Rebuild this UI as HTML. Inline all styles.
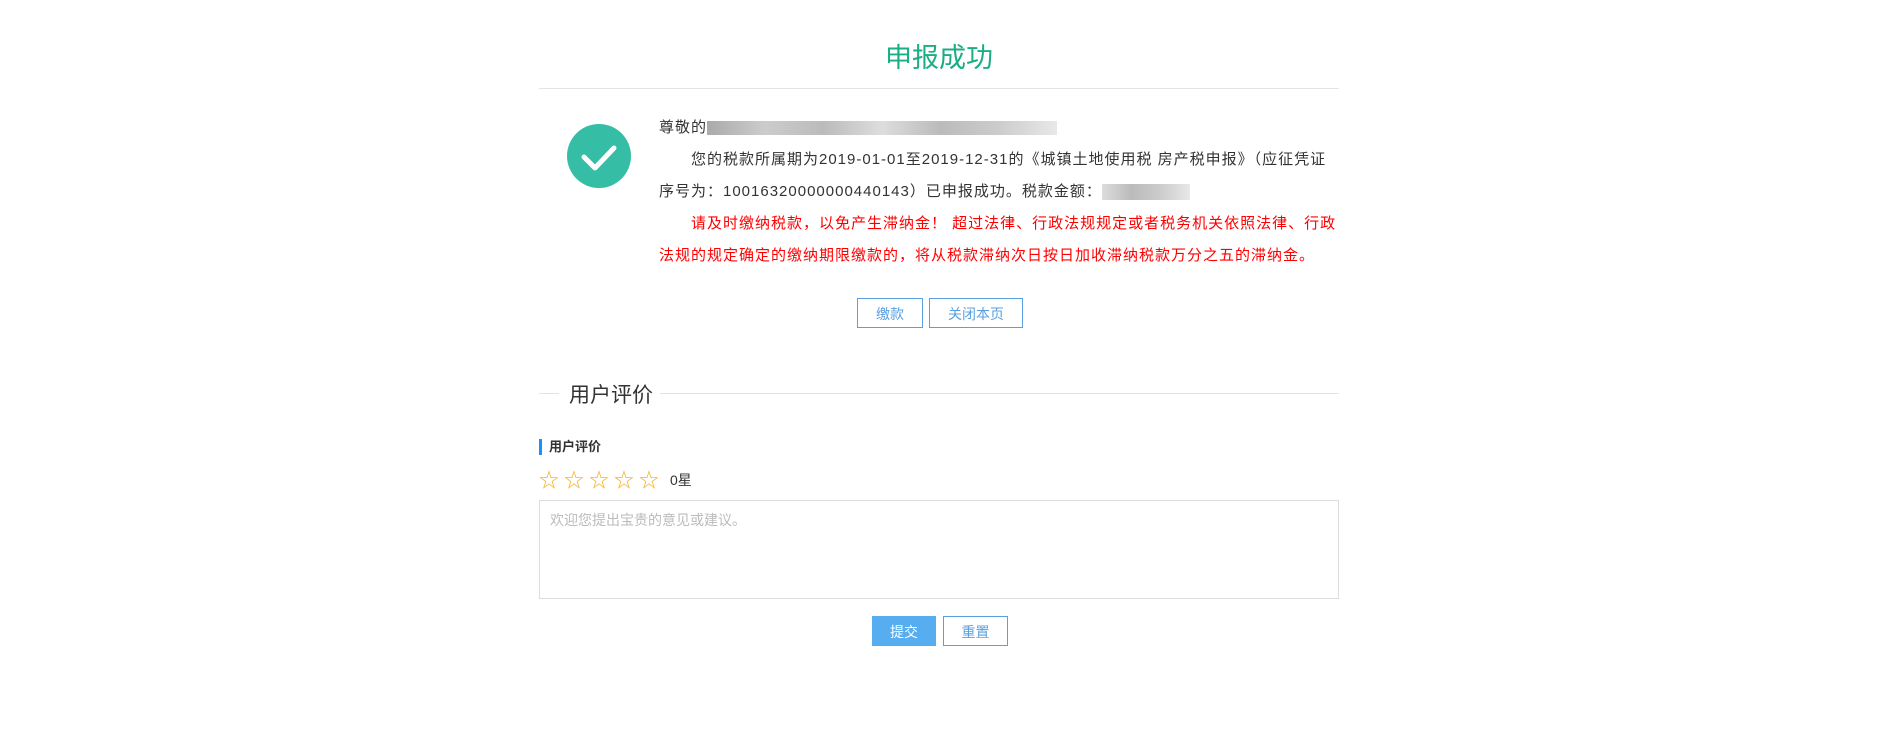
<!DOCTYPE html>
<html><head><meta charset="utf-8"><style>
body{margin:0;background:#fff;font-family:"Liberation Sans","Noto Sans CJK SC",sans-serif;color:#333;}
.wrap{position:absolute;left:539px;width:800px;top:0;}
.title{position:absolute;top:36px;width:800px;text-align:center;color:#1aae84;font-size:27px;}
.hr{position:absolute;top:88px;left:0;width:800px;height:1px;background:#e3e3e3;}
.circle{position:absolute;left:28px;top:124px;width:64px;height:64px;border-radius:50%;background:#35bea5;}
.txt{position:absolute;left:120px;top:112px;width:700px;font-size:15px;line-height:32px;white-space:nowrap;letter-spacing:1px;}
.red{color:#f00;}
.btn{position:absolute;height:30px;border:1px solid #5aa0e0;color:#5aa0e0;font-size:14px;line-height:30px;text-align:center;box-sizing:border-box;background:#fff;}
.sec{position:absolute;top:393px;height:1px;background:#e3e3e3;}
.sect{position:absolute;top:379px;left:30px;font-size:21px;color:#333;}
.lbl{position:absolute;top:439px;left:0;border-left:3px solid #1890ff;padding-left:7px;font-size:13px;font-weight:bold;line-height:16px;}
.stars{position:absolute;top:464px;left:0;font-size:20px;color:#f5b025;letter-spacing:5px;}
.ta{position:absolute;top:500px;left:0;width:800px;height:99px;border:1px solid #ddd;box-sizing:border-box;padding:9px 10px;color:#bbb;font-size:14px;}
</style></head><body>
<div class="wrap">
<div class="title">申报成功</div>
<div class="hr"></div>
<div class="circle"><svg width="64" height="64" viewBox="0 0 64 64"><path d="M17 33 L28 44 L47 24" stroke="#fff" stroke-width="5" fill="none" stroke-linecap="round" stroke-linejoin="round"/></svg></div>
<div class="txt">
<div>尊敬的<span style="display:inline-block;width:350px;height:14px;background:linear-gradient(90deg,#aaa,#ccc,#bbb,#ddd,#bbb,#ccc,#e8e8e8);vertical-align:middle"></span></div>
<div style="padding-left:32px">您的税款所属期为2019-01-01至2019-12-31的《城镇土地使用税 房产税申报》（应征凭证</div>
<div>序号为：10016320000000440143）已申报成功。税款金额：<span style="display:inline-block;width:88px;height:16px;background:linear-gradient(90deg,#ddd,#bbb,#ccc,#e8e8e8);vertical-align:middle"></span></div>
<div class="red" style="padding-left:32px">请及时缴纳税款，以免产生滞纳金！ 超过法律、行政法规规定或者税务机关依照法律、行政</div>
<div class="red">法规的规定确定的缴纳期限缴款的，将从税款滞纳次日按日加收滞纳税款万分之五的滞纳金。</div>
</div>
<div class="btn" style="left:318px;top:298px;width:66px;">缴款</div>
<div class="btn" style="left:390px;top:298px;width:94px;">关闭本页</div>
<div class="sec" style="left:0;width:20px"></div>
<div class="sect">用户评价</div>
<div class="sec" style="left:121px;width:679px"></div>
<div class="lbl">用户评价</div>
<div class="stars">☆☆☆☆☆<span style="color:#333;font-size:14px;letter-spacing:0;vertical-align:2px;margin-left:6px">0星</span></div>
<div class="ta">欢迎您提出宝贵的意见或建议。</div>
<div class="btn" style="left:333px;top:616px;width:64px;background:#56aef0;border-color:#56aef0;color:#fff;">提交</div>
<div class="btn" style="left:404px;top:616px;width:65px;">重置</div>
</div>
</body></html>
